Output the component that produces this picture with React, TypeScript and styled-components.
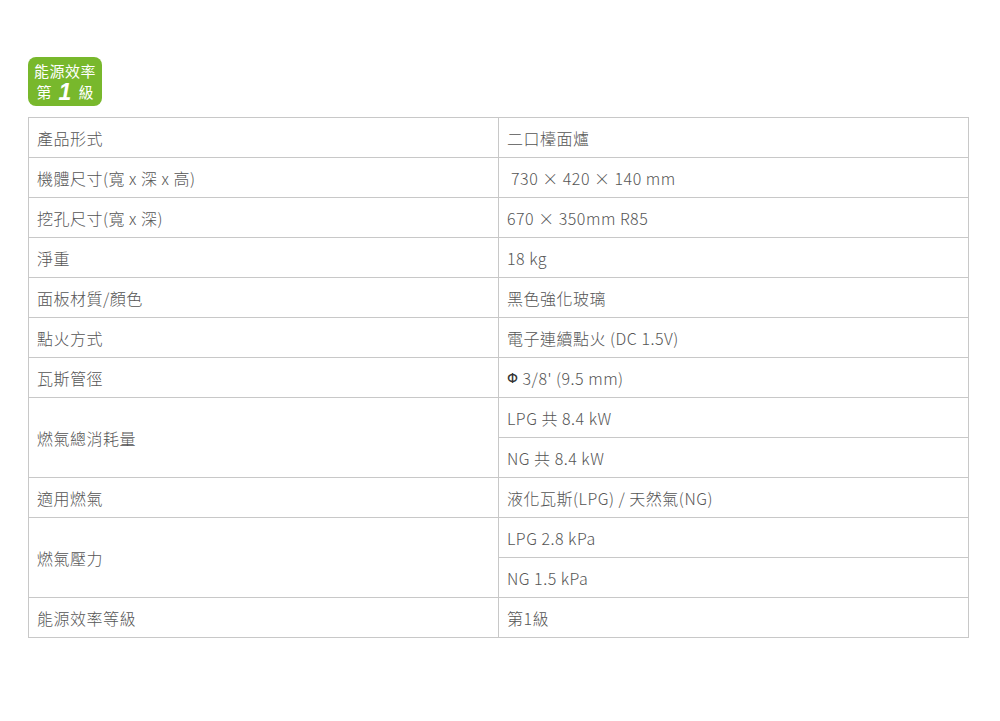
import React from 'react';
import styled, { createGlobalStyle } from 'styled-components';

const GlobalStyle = createGlobalStyle`
  html, body { margin: 0; padding: 0; background: #fff; }
  body {
    font-family: "Noto Sans CJK TC", "Noto Sans", sans-serif;
    color: #555;
  }
`;

type Spec = { label: string; values: string[] };

const specs: Spec[] = [
  { label: '產品形式', values: ['二口檯面爐'] },
  { label: '機體尺寸(寬 x 深 x 高)', values: ['\u00a0730 × 420 × 140 mm'] },
  { label: '挖孔尺寸(寬 x 深)', values: ['670 × 350mm R85'] },
  { label: '淨重', values: ['18 kg'] },
  { label: '面板材質/顏色', values: ['黑色強化玻璃'] },
  { label: '點火方式', values: ['電子連續點火 (DC 1.5V)'] },
  { label: '瓦斯管徑', values: ['PHI'] },
  { label: '燃氣總消耗量', values: ['LPG 共 8.4 kW', 'NG 共 8.4 kW'] },
  { label: '適用燃氣', values: ['液化瓦斯(LPG) / 天然氣(NG)'] },
  { label: '燃氣壓力', values: ['LPG 2.8 kPa', 'NG 1.5 kPa'] },
  { label: '能源效率等級', values: ['第1級'] },
];

const Page = styled.div`
  padding: 57px 31px 80px 28px;
`;

const Badge = styled.div`
  width: 74px;
  height: 49px;
  box-sizing: border-box;
  background: #78b82c;
  border-radius: 8px;
  color: #fff;
  display: flex;
  flex-direction: column;
  align-items: center;
  justify-content: center;
  gap: 2px;
  margin-bottom: 11px;
`;

const BadgeTop = styled.div`
  font-size: 15px;
  line-height: 18px;
  letter-spacing: 0.5px;
`;

const BadgeBottom = styled.div`
  display: flex;
  align-items: center;
  gap: 7px;
  font-size: 15px;
  line-height: 20px;
  height: 20px;
`;

const BigOne = styled.span`
  font-family: "Liberation Sans", Arial, sans-serif;
  font-style: italic;
  font-weight: bold;
  font-size: 23px;
  line-height: 20px;
`;

const Table = styled.div`
  width: 941px;
  box-sizing: border-box;
  border: 1px solid #c8c8c8;
  border-bottom: none;
  display: grid;
  grid-template-columns: 470px 1fr;
`;

const LabelCell = styled.div`
  border-right: 1px solid #c8c8c8;
  border-bottom: 1px solid #c8c8c8;
  padding-left: 8px;
  display: flex;
  align-items: center;
  font-size: 16px;
  font-weight: 300;
  letter-spacing: 0.5px;
  color: #555;
`;

const ValueStack = styled.div`
  display: flex;
  flex-direction: column;
`;

const ValueCell = styled.div`
  height: 39px;
  border-bottom: 1px solid #c8c8c8;
  padding-left: 8px;
  display: flex;
  align-items: center;
  font-size: 16px;
  font-weight: 300;
  letter-spacing: 0.5px;
  color: #555;
  white-space: pre;
`;

const Phi = styled.b`
  font-family: "DejaVu Sans", sans-serif;
  font-size: 14px;
  color: #333;
  margin-right: 4px;
`;

function renderValue(v: string) {
  if (v === 'PHI') {
    return (
      <>
        <Phi>Φ</Phi>3/8' (9.5 mm)
      </>
    );
  }
  return v;
}

export default function App() {
  return (
    <Page>
      <GlobalStyle />
      <Badge>
        <BadgeTop>能源效率</BadgeTop>
        <BadgeBottom>
          <span>第</span>
          <BigOne>1</BigOne>
          <span>級</span>
        </BadgeBottom>
      </Badge>
      <Table>
        {specs.map((s) => (
          <React.Fragment key={s.label}>
            <LabelCell>{s.label}</LabelCell>
            <ValueStack>
              {s.values.map((v) => (
                <ValueCell key={v}>{renderValue(v)}</ValueCell>
              ))}
            </ValueStack>
          </React.Fragment>
        ))}
      </Table>
    </Page>
  );
}
